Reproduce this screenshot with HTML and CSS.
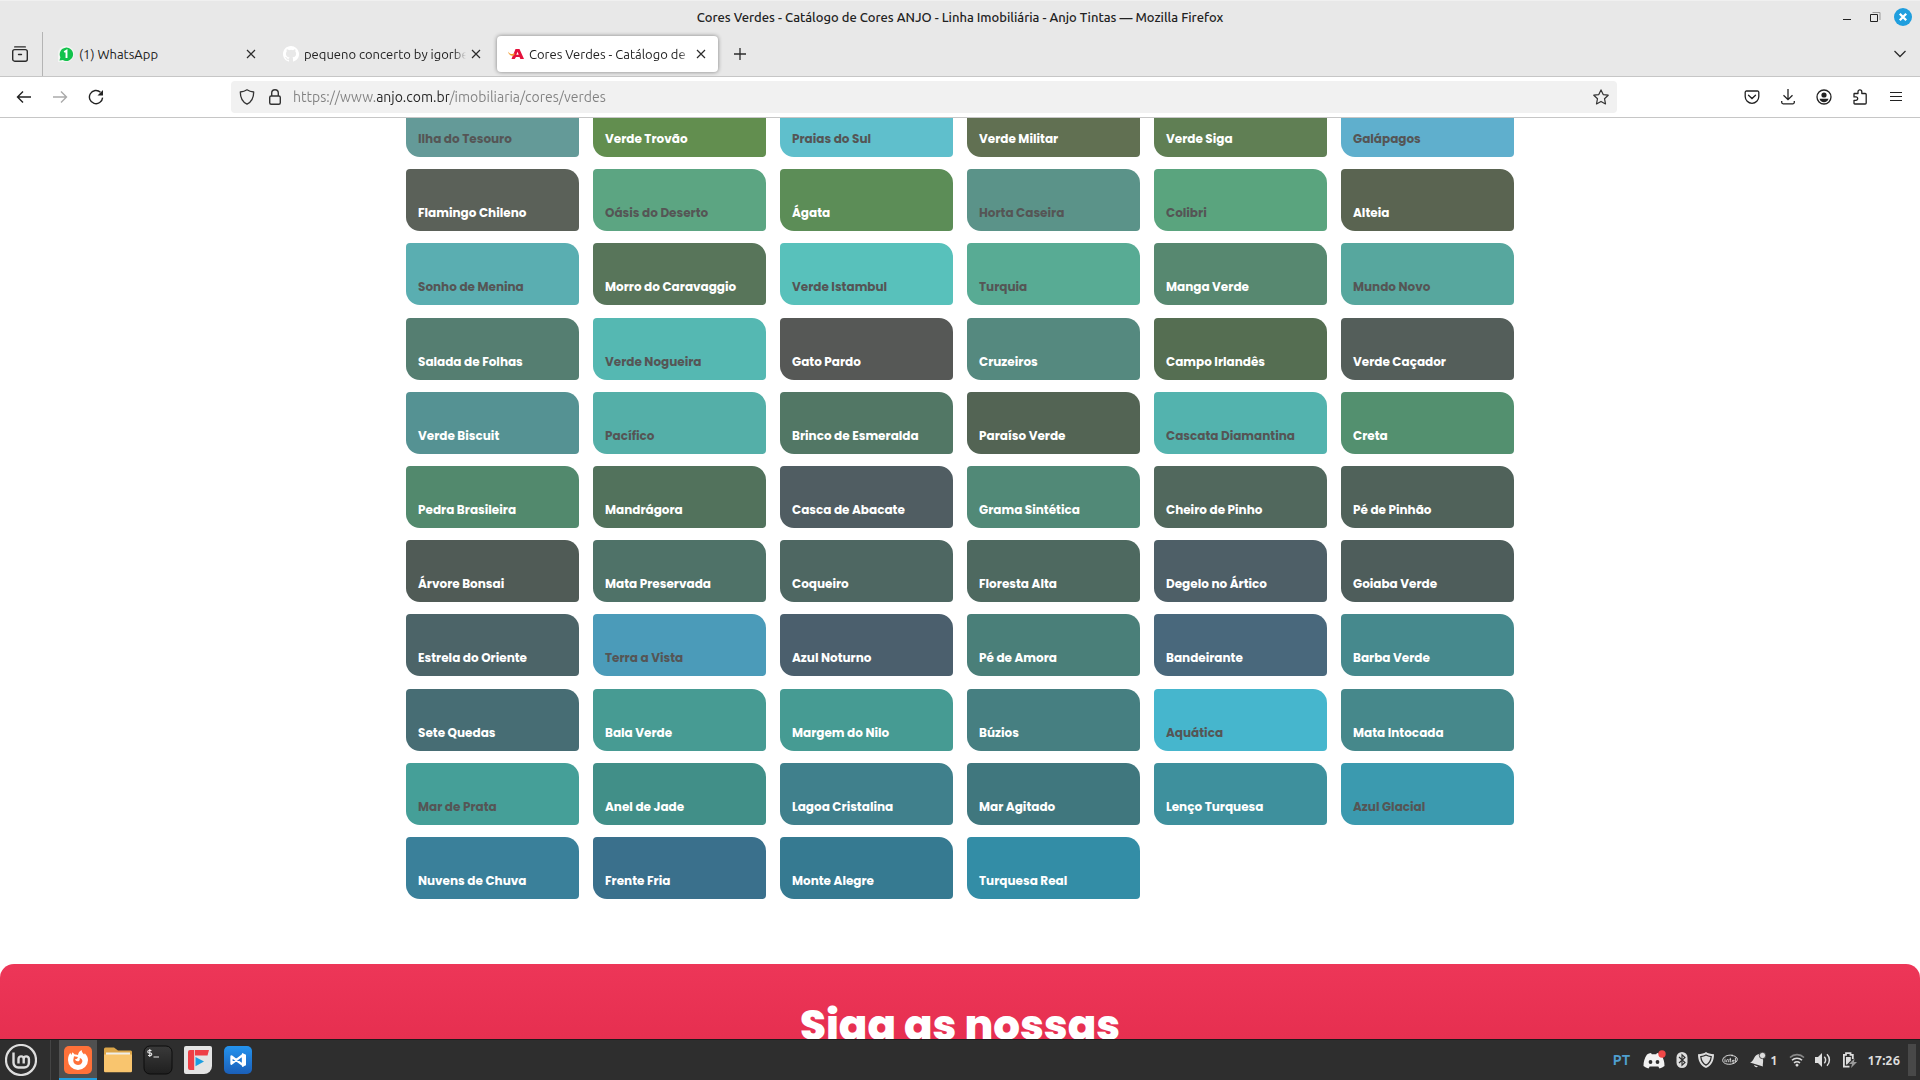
FILE: index.html
```html
<!DOCTYPE html>
<html lang="pt-BR">
<head>
<meta charset="utf-8">
<meta name="viewport" content="width=device-width, initial-scale=1">
<title>Cores Verdes - Catálogo de Cores ANJO</title>
<link rel="stylesheet" href="styles.css">
</head>
<body>
<div class="desktop">
  <header class="titlebar">
    <span class="window-title">Cores Verdes - Catálogo de Cores ANJO - Linha Imobiliária - Anjo Tintas — Mozilla Firefox</span>
    <div class="window-controls">
      <button class="icon-btn" aria-label="Minimizar"><svg width="18" height="18" viewBox="0 0 18 18"><path d="M5 11.5h8" stroke="#222"/></svg></button>
      <button class="icon-btn" aria-label="Restaurar"><svg width="18" height="18" viewBox="0 0 18 18" fill="none"><path d="M6.500 4.500H14V12" stroke="#999"/><path d="M4.500 6.500h7v7h-7z" stroke="#222"/></svg></button>
      <button class="icon-btn" aria-label="Fechar"><svg width="18" height="18" viewBox="0 0 18 18"><circle cx="9" cy="9" r="9" fill="#1f9ede"/><path d="M5.800 5.800l6.400 6.400M12.200 5.800l-6.400 6.400" stroke="#fff" stroke-width="2.300"/></svg></button>
    </div>
  </header>

  <nav class="tabstrip" aria-label="Abas">
    <div class="tab-tools">
      <button class="icon-btn" aria-label="Firefox View"><svg width="16" height="16" viewBox="0 0 16 16" fill="none" stroke="#2b2b2b" stroke-width="1.400" stroke-linecap="round"><path d="M2.700 .9h10.600"/><rect x=".7" y="3.600" width="14.600" height="11.600" rx="2"/><path d="M6.500 8.500h3"/></svg></button>
    </div>
    <div class="tab">
      <svg width="16" height="16" viewBox="0 0 16 16"><path d="M0 16V8a8 8 0 1 1 8 8z" fill="#f3f6f3"/><path d="M1.500 14.500l.9-3.200A6.700 6.700 0 1 1 4.900 14z" fill="#12c24b"/><path d="M6.200 6l2.300-1.400V12" stroke="#fff" stroke-width="1.900" fill="none"/></svg>
      <span class="tab-label">(1) WhatsApp</span>
      <button class="icon-btn" aria-label="Fechar aba"><svg width="10" height="10" viewBox="0 0 10 10"><path d="M1 1l8 8M9 1l-8 8" stroke="#2b2b2b" stroke-width="1.200"/></svg></button>
    </div>
    <div class="tab">
      <svg width="16" height="16" viewBox="0 0 16 16"><path fill="#fff" d="M8 0C3.580 0 0 3.580 0 8c0 3.540 2.290 6.530 5.470 7.590.4.070.55-.17.55-.38v-1.490c-2.010.37-2.530-.49-2.690-.94-.09-.23-.48-.94-.82-1.130-.28-.15-.68-.52-.01-.53.63-.01 1.080.58 1.230.82.72 1.210 1.870.87 2.330.66.07-.52.28-.87.51-1.070-1.780-.2-3.640-.89-3.640-3.950 0-.87.31-1.590.82-2.150-.08-.2-.36-1.020.08-2.120 0 0 .67-.21 2.200.82a7.500 7.500 0 0 1 4 0c1.530-1.040 2.200-.82 2.200-.82.44 1.100.16 1.920.08 2.120.51.56.82 1.270.82 2.150 0 3.070-1.870 3.750-3.650 3.950.29.25.54.73.54 1.480v2.200c0 .21.150.46.55.38A8 8 0 0 0 8 0z"/></svg>
      <span class="tab-label tab-label-long">pequeno concerto by igorbe</span>
      <button class="icon-btn" aria-label="Fechar aba"><svg width="10" height="10" viewBox="0 0 10 10"><path d="M1 1l8 8M9 1l-8 8" stroke="#2b2b2b" stroke-width="1.200"/></svg></button>
    </div>
    <div class="tab tab-active">
      <svg width="16" height="16" viewBox="0 0 16 16"><path d="M7.500 3h4L16 13h-3.600l-.9-2H8l-1.300 2H3.500zM9.600 5.800L8.300 8.700h2.400z" fill="#e4123c"/><path d="M0 5.500c1.500 2.500 4 3.300 7.200 1.800L6 9.500C3 10.500.5 8.500 0 5.500z" fill="#f39a2d"/></svg>
      <span class="tab-label tab-label-long">Cores Verdes - Catálogo de</span>
      <button class="icon-btn" aria-label="Fechar aba"><svg width="10" height="10" viewBox="0 0 10 10"><path d="M1 1l8 8M9 1l-8 8" stroke="#2b2b2b" stroke-width="1.200"/></svg></button>
    </div>
    <button class="icon-btn new-tab" aria-label="Nova aba"><svg width="12" height="12" viewBox="0 0 12 12"><path d="M6 0v12M0 6h12" stroke="#2b2b2b" stroke-width="1.300"/></svg></button>
    <button class="icon-btn all-tabs" aria-label="Listar abas"><svg width="12" height="12" viewBox="0 0 12 12" fill="none"><path d="M.5 3L6 8.500 11.500 3" stroke="#2b2b2b" stroke-width="1.300"/></svg></button>
  </nav>

  <div class="toolbar">
    <div class="nav-buttons">
      <button class="icon-btn" aria-label="Voltar"><svg width="16" height="16" viewBox="0 0 16 16" fill="none" stroke="#222" stroke-width="1.400"><path d="M15 8H1.500M7 2.500L1.500 8 7 13.500"/></svg></button>
      <button class="icon-btn" aria-label="Avançar"><svg width="16" height="16" viewBox="0 0 16 16" fill="none" stroke="#aaa" stroke-width="1.400"><path d="M1 8h13.500M9 2.500L14.500 8 9 13.500"/></svg></button>
      <button class="icon-btn" aria-label="Recarregar"><svg width="16" height="16" viewBox="0 0 16 16" fill="none"><path d="M12.500 3.200A6.600 6.600 0 1 0 14.600 8.600" stroke="#222" stroke-width="1.400"/><path d="M15 1v5.500H9.500z" fill="#222"/></svg></button>
    </div>
    <div class="urlbar">
      <svg width="16" height="16" viewBox="0 0 16 16" fill="none" stroke="#333" stroke-width="1.300" stroke-linejoin="round"><path d="M8 .8c2 1.400 4 2 6.700 2.200 0 5.800-1.700 9.700-6.700 12.200C3 12.700 1.300 8.800 1.300 3 4 2.800 6 2.200 8 .8z"/></svg>
      <svg width="16" height="16" viewBox="0 0 16 16" fill="none" stroke="#333" stroke-width="1.400"><rect x="2.700" y="7" width="10.600" height="8.300" rx="1.500"/><path d="M4.700 7V4a3.300 3.300 0 0 1 6.600 0v3"/></svg>
      <input class="url-input" type="text" aria-label="Endereço" value="https://www.anjo.com.br/imobiliaria/cores/verdes">
      <button class="icon-btn" aria-label="Favoritar"><svg width="16" height="16" viewBox="0 0 16 16" fill="none" stroke="#333" stroke-width="1.200" stroke-linejoin="round"><path d="M8 .9l2.200 4.700 5 .6-3.700 3.500 1 5.200L8 12.400l-4.500 2.500 1-5.200L.8 6.200l5-.6z"/></svg></button>
    </div>
    <div class="tool-buttons">
      <button class="icon-btn" aria-label="Pocket"><svg width="16" height="16" viewBox="0 0 16 16" fill="none" stroke="#222" stroke-width="1.300"><path d="M2.500 2h11A1.300 1.300 0 0 1 14.800 3.300V7.500A6.800 6.800 0 0 1 1.200 7.500V3.300A1.300 1.300 0 0 1 2.500 2z"/><path d="M4.500 6.200L8 9.500l3.500-3.300" stroke-linecap="round"/></svg></button>
      <button class="icon-btn" aria-label="Downloads"><svg width="16" height="16" viewBox="0 0 16 16" fill="none" stroke="#222" stroke-width="1.300"><path d="M8 0v10.500M3.500 6.300L8 10.700l4.500-4.400M1.700 12v1.300a1.500 1.500 0 0 0 1.500 1.500h9.600a1.500 1.500 0 0 0 1.500-1.500V12"/></svg></button>
      <button class="icon-btn" aria-label="Conta"><svg width="16" height="16" viewBox="0 0 16 16"><circle cx="8" cy="8" r="7" fill="none" stroke="#222" stroke-width="1.300"/><circle cx="8" cy="6" r="2.600" fill="#222"/><path d="M3.500 9.800h9c-.5 2.300-2.400 3.500-4.500 3.500s-4-1.200-4.500-3.500z" fill="#222"/></svg></button>
      <button class="icon-btn" aria-label="Extensões"><svg width="16" height="16" viewBox="0 0 16 16" fill="none" stroke="#222" stroke-width="1.300" stroke-linejoin="round"><path d="M2.500 4.500H6V2.800a1.900 1.900 0 0 1 3.800 0v1.700h3.400a1 1 0 0 1 1 1V14a1 1 0 0 1-1 1H2.800a.8.800 0 0 1-.8-.8V11.300h2a1.700 1.700 0 0 0 0-3.400H2V5a.5.500 0 0 1 .5-.5z"/></svg></button>
      <button class="icon-btn" aria-label="Menu"><svg width="16" height="16" viewBox="0 0 16 16"><path d="M2 3.500h12M2 7.500h12M2 11.500h12" stroke="#222" stroke-width="1.200"/></svg></button>
    </div>
  </div>

  <div class="viewport">
    <main class="swatches">
      <a href="#" class="swatch dim" style="background-color:#649a98">Ilha do Tesouro</a>
      <a href="#" class="swatch" style="background-color:#628e4f">Verde Trovão</a>
      <a href="#" class="swatch dim" style="background-color:#5fbfcc">Praias do Sul</a>
      <a href="#" class="swatch" style="background-color:#617052">Verde Militar</a>
      <a href="#" class="swatch" style="background-color:#607f54">Verde Siga</a>
      <a href="#" class="swatch dim" style="background-color:#5fafcd">Galápagos</a>

      <a href="#" class="swatch" style="background-color:#5b6159">Flamingo Chileno</a>
      <a href="#" class="swatch dim" style="background-color:#5ca582">Oásis do Deserto</a>
      <a href="#" class="swatch" style="background-color:#5c8d57">Ágata</a>
      <a href="#" class="swatch dim" style="background-color:#5b9389">Horta Caseira</a>
      <a href="#" class="swatch dim" style="background-color:#5aa47e">Colibri</a>
      <a href="#" class="swatch" style="background-color:#5a6451">Alteia</a>

      <a href="#" class="swatch dim" style="background-color:#5aaeb1">Sonho de Menina</a>
      <a href="#" class="swatch" style="background-color:#58755a">Morro do Caravaggio</a>
      <a href="#" class="swatch dim" style="background-color:#58c1bb">Verde Istambul</a>
      <a href="#" class="swatch dim" style="background-color:#58ab94">Turquia</a>
      <a href="#" class="swatch" style="background-color:#578870">Manga Verde</a>
      <a href="#" class="swatch dim" style="background-color:#57a79e">Mundo Novo</a>

      <a href="#" class="swatch" style="background-color:#557e71">Salada de Folhas</a>
      <a href="#" class="swatch dim" style="background-color:#55b8b2">Verde Nogueira</a>
      <a href="#" class="swatch" style="background-color:#565856">Gato Pardo</a>
      <a href="#" class="swatch" style="background-color:#55897f">Cruzeiros</a>
      <a href="#" class="swatch" style="background-color:#556e52">Campo Irlandês</a>
      <a href="#" class="swatch" style="background-color:#545e5a">Verde Caçador</a>

      <a href="#" class="swatch" style="background-color:#559293">Verde Biscuit</a>
      <a href="#" class="swatch dim" style="background-color:#54afa8">Pacífico</a>
      <a href="#" class="swatch" style="background-color:#527765">Brinco de Esmeralda</a>
      <a href="#" class="swatch" style="background-color:#536454">Paraíso Verde</a>
      <a href="#" class="swatch dim" style="background-color:#53b3ae">Cascata Diamantina</a>
      <a href="#" class="swatch" style="background-color:#53906f">Creta</a>

      <a href="#" class="swatch" style="background-color:#52896d">Pedra Brasileira</a>
      <a href="#" class="swatch" style="background-color:#52725c">Mandrágora</a>
      <a href="#" class="swatch" style="background-color:#505d62">Casca de Abacate</a>
      <a href="#" class="swatch" style="background-color:#518977">Grama Sintética</a>
      <a href="#" class="swatch" style="background-color:#51685d">Cheiro de Pinho</a>
      <a href="#" class="swatch" style="background-color:#50625a">Pé de Pinhão</a>

      <a href="#" class="swatch" style="background-color:#505b56">Árvore Bonsai</a>
      <a href="#" class="swatch" style="background-color:#4f7268">Mata Preservada</a>
      <a href="#" class="swatch" style="background-color:#4e6762">Coqueiro</a>
      <a href="#" class="swatch" style="background-color:#4e6960">Floresta Alta</a>
      <a href="#" class="swatch" style="background-color:#4e5f67">Degelo no Ártico</a>
      <a href="#" class="swatch" style="background-color:#4e5d5b">Goiaba Verde</a>

      <a href="#" class="swatch" style="background-color:#4c6468">Estrela do Oriente</a>
      <a href="#" class="swatch dim" style="background-color:#4b9bb9">Terra a Vista</a>
      <a href="#" class="swatch" style="background-color:#4b5f6d">Azul Noturno</a>
      <a href="#" class="swatch" style="background-color:#4a7f79">Pé de Amora</a>
      <a href="#" class="swatch" style="background-color:#49687c">Bandeirante</a>
      <a href="#" class="swatch" style="background-color:#46898d">Barba Verde</a>

      <a href="#" class="swatch" style="background-color:#476d74">Sete Quedas</a>
      <a href="#" class="swatch" style="background-color:#479b93">Bala Verde</a>
      <a href="#" class="swatch" style="background-color:#469b93">Margem do Nilo</a>
      <a href="#" class="swatch" style="background-color:#467f81">Búzios</a>
      <a href="#" class="swatch dim" style="background-color:#46b6cd">Aquática</a>
      <a href="#" class="swatch" style="background-color:#46888b">Mata Intocada</a>

      <a href="#" class="swatch dim" style="background-color:#459f98">Mar de Prata</a>
      <a href="#" class="swatch" style="background-color:#418f88">Anel de Jade</a>
      <a href="#" class="swatch" style="background-color:#40808c">Lagoa Cristalina</a>
      <a href="#" class="swatch" style="background-color:#40777e">Mar Agitado</a>
      <a href="#" class="swatch" style="background-color:#3e909d">Lenço Turquesa</a>
      <a href="#" class="swatch dim" style="background-color:#3b9aaf">Azul Glacial</a>

      <a href="#" class="swatch" style="background-color:#3a809a">Nuvens de Chuva</a>
      <a href="#" class="swatch" style="background-color:#3a708c">Frente Fria</a>
      <a href="#" class="swatch" style="background-color:#367a91">Monte Alegre</a>
      <a href="#" class="swatch" style="background-color:#338da6">Turquesa Real</a>
    </main>
    <section class="social">
      <h2 class="social-title">Siga as nossas</h2>
    </section>
  </div>

  <footer class="taskbar">
    <button class="icon-btn start" aria-label="Menu iniciar"><svg width="32" height="32" viewBox="0 0 32 32" fill="none" stroke="#dedede"><circle cx="16" cy="16" r="15" stroke-width="2.200"/><path d="M8.500 8.500v10.300a4.700 4.700 0 0 0 4.700 4.700h6a4.700 4.700 0 0 0 4.700-4.700V15a2.600 2.600 0 0 0-5.200 0v4.500M18.700 15a2.600 2.600 0 0 0-5.200 0v4.500" stroke-width="2.400"/></svg></button>
    <div class="launchers">
      <button class="icon-btn launcher launcher-active" aria-label="Firefox"><svg width="28" height="28" viewBox="0 0 28 28"><rect width="28" height="28" rx="5" fill="#ff7139"/><path d="M14 24A10 10 0 0 1 4 14c0-3.200 1-5.500 2.300-7.200l1 2.200 1.200-2.700 2.200 2.200c1.400-.3 2.500.1 3.300.5.300-2.200 1.500-3.900 3.600-5 .1 2.200 1.200 3 2.500 4.500l.7-1.200C23 9.500 24 11.600 24 14a10 10 0 0 1-10 10z" fill="#fff"/><path d="M10 10.300l4 .7-1 1.700-2 .6c.4 1.300 1.400 2 2.500 2 1.800 0 2.700-1.400 2.200-3.400 2 .6 3 2 2.600 3.800-.5 2-2.200 3.300-4.300 3.300-3 0-5-2.300-4.700-5.200z" fill="#ff7139"/></svg></button>
      <button class="icon-btn launcher" aria-label="Arquivos"><svg width="28" height="28" viewBox="0 0 28 28"><path d="M0 3a1.500 1.500 0 0 1 1.500-1.500H10l4 3h12A1.500 1.500 0 0 1 28 6v8H0z" fill="#dba549"/><path d="M2 6.500h24V12H2z" fill="#f0eee8"/><path d="M0 8.500h28V25a1.200 1.200 0 0 1-1.200 1.200H1.200A1.200 1.200 0 0 1 0 25z" fill="#f9c56e"/></svg></button>
      <button class="icon-btn launcher" aria-label="Terminal"><svg width="30" height="30" viewBox="0 0 30 30"><defs><linearGradient id="term" x2="0" y2="1"><stop stop-color="#3a3a3a"/><stop offset="1" stop-color="#1f1f1f"/></linearGradient></defs><rect x="1" y="1" width="28" height="28" rx="6" fill="url(#term)" stroke="#0c0c0c"/><path d="M8.500 5.500H6a1 1 0 0 0 0 2.500h1.500a1 1 0 0 1 0 2.500H5M6.800 4v8M10.500 12H16" stroke="#e8e8e8" stroke-width="1.100" fill="none"/></svg></button>
      <button class="icon-btn launcher" aria-label="Editor"><svg width="28" height="28" viewBox="0 0 28 28"><path d="M2 0h24a2 2 0 0 1 2 2v18a8 8 0 0 1-8 8H2a2 2 0 0 1-2-2V2a2 2 0 0 1 2-2z" fill="#e4e4e4"/><path d="M6 4h19l-1.500 5.500H11V4h-.8v20H6a2 2 0 0 1-2-2V6a2 2 0 0 1 2-2z" fill="#ee3f46"/><path d="M11.500 11l8.500 4.600-8.500 4.700z" fill="#1d9ee0"/></svg></button>
      <button class="icon-btn launcher" aria-label="Visual Studio Code"><svg width="28" height="28" viewBox="0 0 28 28"><defs><linearGradient id="code" x2="0" y2="1"><stop stop-color="#2493ee"/><stop offset="1" stop-color="#1b5fb8"/></linearGradient></defs><rect width="28" height="28" rx="5" fill="url(#code)"/><path d="M19 8.800L7.500 17.700V10.500L19 19.200z" stroke="#fff" stroke-width="2.300" stroke-linejoin="round" fill="none"/><path d="M18 7l4 1.800v10.400L18 21z" fill="#fff"/></svg></button>
    </div>
    <div class="tray">
      <span class="layout">PT</span>
      <svg width="24" height="20" viewBox="0 0 24 20"><path d="M5 4.500A16 16 0 0 1 9 3l.8 1.300h4.400L15 3c1.500.3 2.900.8 4 1.500 2.600 3.700 3.500 7.500 3.500 11.500a13 13 0 0 1-5 2.500l-1.200-2H7.700l-1.200 2a13 13 0 0 1-5-2.500c0-4 .9-7.800 3.500-11.500z" fill="#f2f2f2"/><circle cx="8.500" cy="12" r="1.900" fill="#2e2e2e"/><circle cx="15.500" cy="12" r="1.900" fill="#2e2e2e"/><circle cx="20" cy="4" r="3.700" fill="#f04747"/></svg>
      <svg width="16" height="16" viewBox="0 0 16 16"><rect x="2.500" width="11" height="16" rx="5.500" fill="#dedede"/><path d="M5 5l6 5.500-3 2.700V2.800l3 2.700L5 11" stroke="#2e2e2e" stroke-width="1.100" fill="none"/></svg>
      <svg width="16" height="16" viewBox="0 0 16 16"><path d="M8 0c2 1.400 4.500 2 8 2.200 0 6.300-2.200 11.300-8 13.800C2.200 13.500 0 8.500 0 2.200 3.500 2 6 1.400 8 0z" fill="#dedede"/><path d="M8 3c1.500.9 3.300 1.400 5.200 1.600-.3 4-1.900 6.900-5.200 8.500-3.300-1.600-4.900-4.500-5.200-8.500C4.700 4.400 6.500 3.900 8 3z" fill="none" stroke="#2e2e2e" stroke-width="1.200"/></svg>
      <svg width="16" height="16" viewBox="0 0 16 16" fill="none" stroke="#dedede"><path d="M11 3.300C5 2.400.8 5 .7 8.300c0 3 4.400 4.600 9 3.700 3.400-.7 5.600-2.500 5.600-4.700 0-2.300-2.600-3.700-6-3.700"/><path d="M3 7.200v3M3 5.500v.8M4.700 10.200V8.500a1 1 0 0 1 2 0v1.700M8.300 5.800v3.600q0 .8.800.8M7.500 7.500h1.600M10.300 9h2a1.100 1.100 0 1 0-.5 1.200M13.400 5.500v4.700" stroke-width=".9"/></svg>
      <span class="notice"><svg width="16" height="16" viewBox="0 0 16 16"><path d="M0 10.500C4 9.500 3.500 4 7.500 2.500c2-.8 3 .2 3.500 1.200l2 3c.5 4-.5 5.300 0 7.800z" fill="#dedede"/><circle cx="12.500" cy="3.500" r="3.200" fill="#dedede" stroke="#2e2e2e" stroke-width=".8"/><path d="M4 13l4 1.500c-1.500 1.300-3.500.7-4-1.500z" fill="#dedede"/></svg>1</span>
      <svg width="16" height="16" viewBox="0 0 16 16" fill="none" stroke-width="1.600"><path d="M1 5.500a10 10 0 0 1 14 0" stroke="#888"/><path d="M3 8.300a7 7 0 0 1 10 0M5 11a4.300 4.300 0 0 1 6 0" stroke="#dedede"/><path d="M8 11.500l1.800 1.500L8 15l-1.800-2z" fill="#dedede"/></svg>
      <svg width="16" height="16" viewBox="0 0 16 16"><path d="M0 5h3l4-4v14l-4-4H0z" fill="#dedede"/><path d="M9.300 4.800a4.500 4.500 0 0 1 0 6.400M12 2.300a8 8 0 0 1 0 11.400" stroke="#dedede" stroke-width="1.500" fill="none"/></svg>
      <svg width="16" height="16" viewBox="0 0 16 16"><path d="M8.500 14.700H2.900V2.900H5V1.200h4.500v1.700h2.300V7" fill="none" stroke="#dedede" stroke-width="1.800"/><path d="M5 5h4.800v3.500L6 12.500H5z" fill="#dedede"/><path d="M13.500 6.500L8 12h3l-1 4 6-6h-3z" fill="#999"/></svg>
      <time class="clock">17:26</time>
      <button class="show-desktop" aria-label="Mostrar área de trabalho"></button>
    </div>
  </footer>
</div>
</body>
</html>
```
FILE: styles.css
```css
* {
  box-sizing: border-box;
}

body {
  margin: 0;
  background: #fff;
  color: #222;
  font-family: Ubuntu, "Noto Sans", sans-serif;
  font-size: 14px;
}

svg {
  display: block;
  flex: none;
}

.desktop {
  display: flex;
  flex-direction: column;
  height: 100vh;
  overflow: hidden;
}

.icon-btn {
  display: flex;
  align-items: center;
  justify-content: center;
  padding: 0;
  border: 0;
  background: none;
}

/* Window title */
.titlebar {
  display: grid;
  grid-template-columns: 1fr auto 1fr;
  align-items: center;
  height: 32px;
  padding: 0 8px;
  border-top: 1px solid #f0f0f0;
  background: #e8e8e8;
}

.window-title {
  grid-column: 2;
  font-size: 13px;
  font-weight: 500;
}

.window-controls {
  display: flex;
  justify-content: flex-end;
  gap: 10px;
}

/* Tabs */
.tabstrip {
  display: flex;
  align-items: center;
  gap: 4px;
  height: 45px;
  border-bottom: 1px solid #c6c6c6;
  background: #e8e8e8;
}

.tab-tools {
  display: flex;
  align-items: center;
  align-self: stretch;
  padding: 0 14px 0 12px;
  border-right: 1px solid #b4b4b4;
}

.tab {
  display: flex;
  align-items: center;
  gap: 5px;
  width: 221px;
  height: 36px;
  padding: 0 12px 0 11px;
  border-radius: 4px;
  font-size: 13px;
}

.tab-active {
  background: #fff;
  box-shadow: 0 0 4px rgba(0, 0, 0, 0.45);
}

.tab-label {
  flex: 1;
  min-width: 0;
  white-space: nowrap;
}

.tab-label-long {
  -webkit-mask-image: linear-gradient(to left, transparent, #000 12px);
  mask-image: linear-gradient(to left, transparent, #000 12px);
}

.new-tab {
  margin-left: 12px;
}

.all-tabs {
  margin: 0 14px 0 auto;
}

/* Address bar */
.toolbar {
  display: flex;
  align-items: center;
  height: 41px;
  border-bottom: 1px solid #c6c6c6;
  background: #fff;
}

.nav-buttons,
.tool-buttons {
  display: flex;
  gap: 20px;
  padding: 0 16px;
}

.urlbar {
  display: flex;
  align-items: center;
  gap: 12px;
  flex: 1;
  height: 32px;
  margin: 0 111px;
  padding: 0 8px;
  border-radius: 4px;
  background: #f1f1f1;
}

.urlbar .url-input {
  flex: 1;
  margin-left: -2px;
  padding: 0;
  border: 0;
  outline: 0;
  color: transparent;
  background: linear-gradient(to right, #808080 83px, #222 83px, #222 156px, #808080 156px);
  -webkit-background-clip: text;
  background-clip: text;
  font-family: inherit;
  font-size: 14px;
}

/* Page content, scrolled part of the way down the catalogue */
.viewport {
  flex: 1;
  min-height: 0;
  overflow: hidden;
  font-family: Poppins, Inter, sans-serif;
}

.swatches {
  display: grid;
  grid-template-columns: repeat(6, 1fr);
  grid-auto-rows: 62px;
  align-content: space-between;
  column-gap: 14px;
  width: 1108px;
  max-width: 100%;
  height: 804px;
  margin: -23px auto 65px;
}

.swatch {
  display: flex;
  align-items: flex-end;
  padding: 0 12px 10px;
  border-radius: 4px 14px;
  color: #fff;
  font-size: 12px;
  font-weight: 700;
  line-height: 16px;
  text-decoration: none;
  white-space: nowrap;
}

.dim {
  color: #555;
}

.social {
  min-height: 320px;
  padding: 37px 24px;
  border-radius: 14px 14px 0 0;
  background: linear-gradient(#ed3658, #e62f50 75px);
  text-align: center;
}

.social-title {
  margin: 0;
  color: #fff;
  font-size: 42px;
  font-weight: 800;
  line-height: 50px;
}

/* Desktop panel */
.taskbar {
  display: flex;
  align-items: center;
  height: 41px;
  border-top: 1px solid #1c1c1c;
  background: #2e2e2e;
  color: #dedede;
}

.start {
  align-self: stretch;
  padding: 0 13px 0 5px;
  border-right: 1px solid #444;
}

.launchers {
  display: flex;
  gap: 2px;
  align-self: stretch;
  padding-left: 8px;
}

.launcher {
  width: 38px;
}

.launcher-active {
  background: #505050;
  box-shadow: inset 0 -2px #1f9ede;
}

.tray {
  display: flex;
  align-items: center;
  gap: 8px;
  margin-left: auto;
  padding-right: 4px;
  font-size: 13px;
  font-weight: 700;
}

.layout {
  margin-right: 4px;
  color: #4f9fd0;
  font-size: 14px;
}

.notice {
  display: flex;
  align-items: center;
  gap: 4px;
  margin: 0 4px;
}

.tray > svg:nth-last-of-type(-n + 3) {
  margin-right: 2px;
}

.show-desktop {
  width: 8px;
  height: 32px;
  padding: 0;
  border: 0;
  background: #484848;
}
```
